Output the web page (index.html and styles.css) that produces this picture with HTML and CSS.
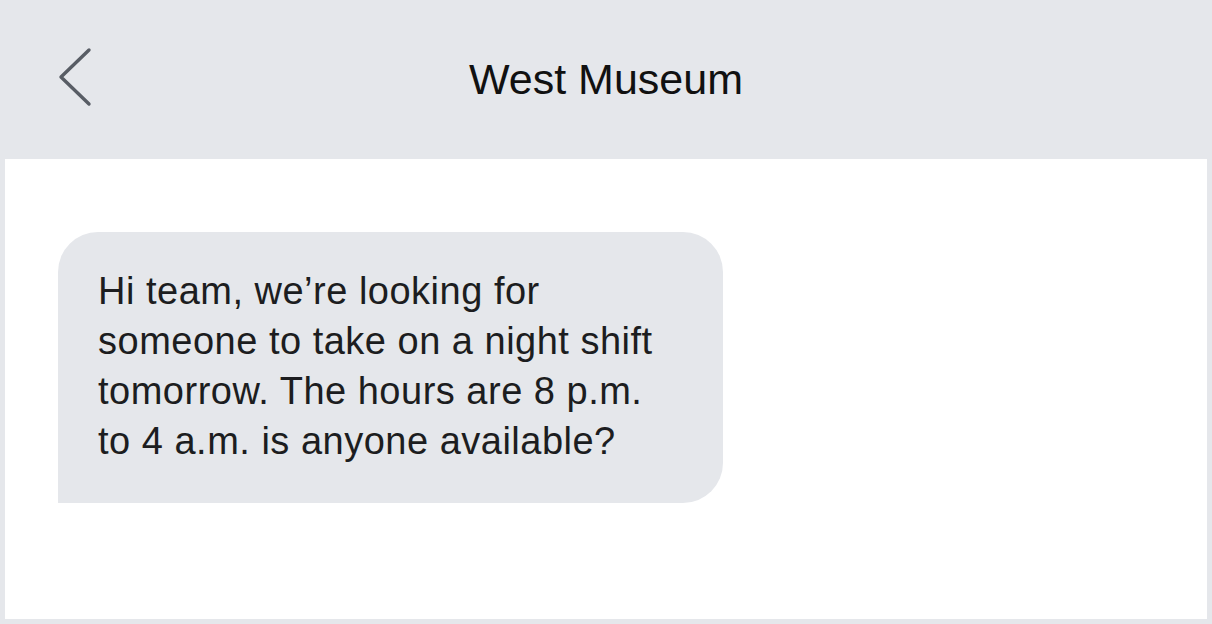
FILE: index.html
```html
<!DOCTYPE html>
<html lang="en">
<head>
<meta charset="utf-8">
<title>West Museum</title>
<link rel="stylesheet" href="styles.css">
</head>
<body>
<div class="app">
  <header class="topbar">
    <button class="back" aria-label="Back">
      <svg width="36" height="62" viewBox="0 0 36 62" fill="none" stroke="#585d65" stroke-width="3.4" stroke-linecap="round" stroke-linejoin="round"><path d="M33 4 L5 31 L33 58"/></svg>
    </button>
    <h1 class="title">West Museum</h1>
    <div class="spacer"></div>
  </header>
  <main class="thread">
    <div class="bubble">Hi team, we’re looking for<br>someone to take on a night shift<br>tomorrow. The hours are 8 p.m.<br>to 4 a.m. is anyone available?</div>
  </main>
</div>
</body>
</html>
```

FILE: styles.css
```css
html, body {
  margin: 0;
  padding: 0;
  height: 100%;
}
body {
  background: #e5e7eb;
  font-family: "Liberation Sans", Arial, sans-serif;
}
.app {
  height: 624px;
  display: flex;
  flex-direction: column;
  padding: 0 5px 5px;
  box-sizing: border-box;
}
.topbar {
  height: 159px;
  flex: none;
  display: grid;
  grid-template-columns: 1fr auto 1fr;
  align-items: center;
  padding: 0 51px;
}
.back {
  justify-self: start;
  background: none;
  border: 0;
  padding: 0;
  margin: 0 0 5px 0;
  display: flex;
  cursor: pointer;
}
.title {
  margin: 0;
  font-size: 43px;
  line-height: 1;
  font-weight: 400;
  color: #111111;
}
.thread {
  flex: 1;
  background: #ffffff;
  padding: 73px 0 0 53px;
}
.bubble {
  width: 665px;
  box-sizing: border-box;
  background: #e5e7eb;
  border-radius: 40px 40px 40px 0;
  padding: 34px 20px 37px 40px;
  font-size: 38px;
  line-height: 50px;
  letter-spacing: 0.5px;
  color: #1c1d20;
}
```
